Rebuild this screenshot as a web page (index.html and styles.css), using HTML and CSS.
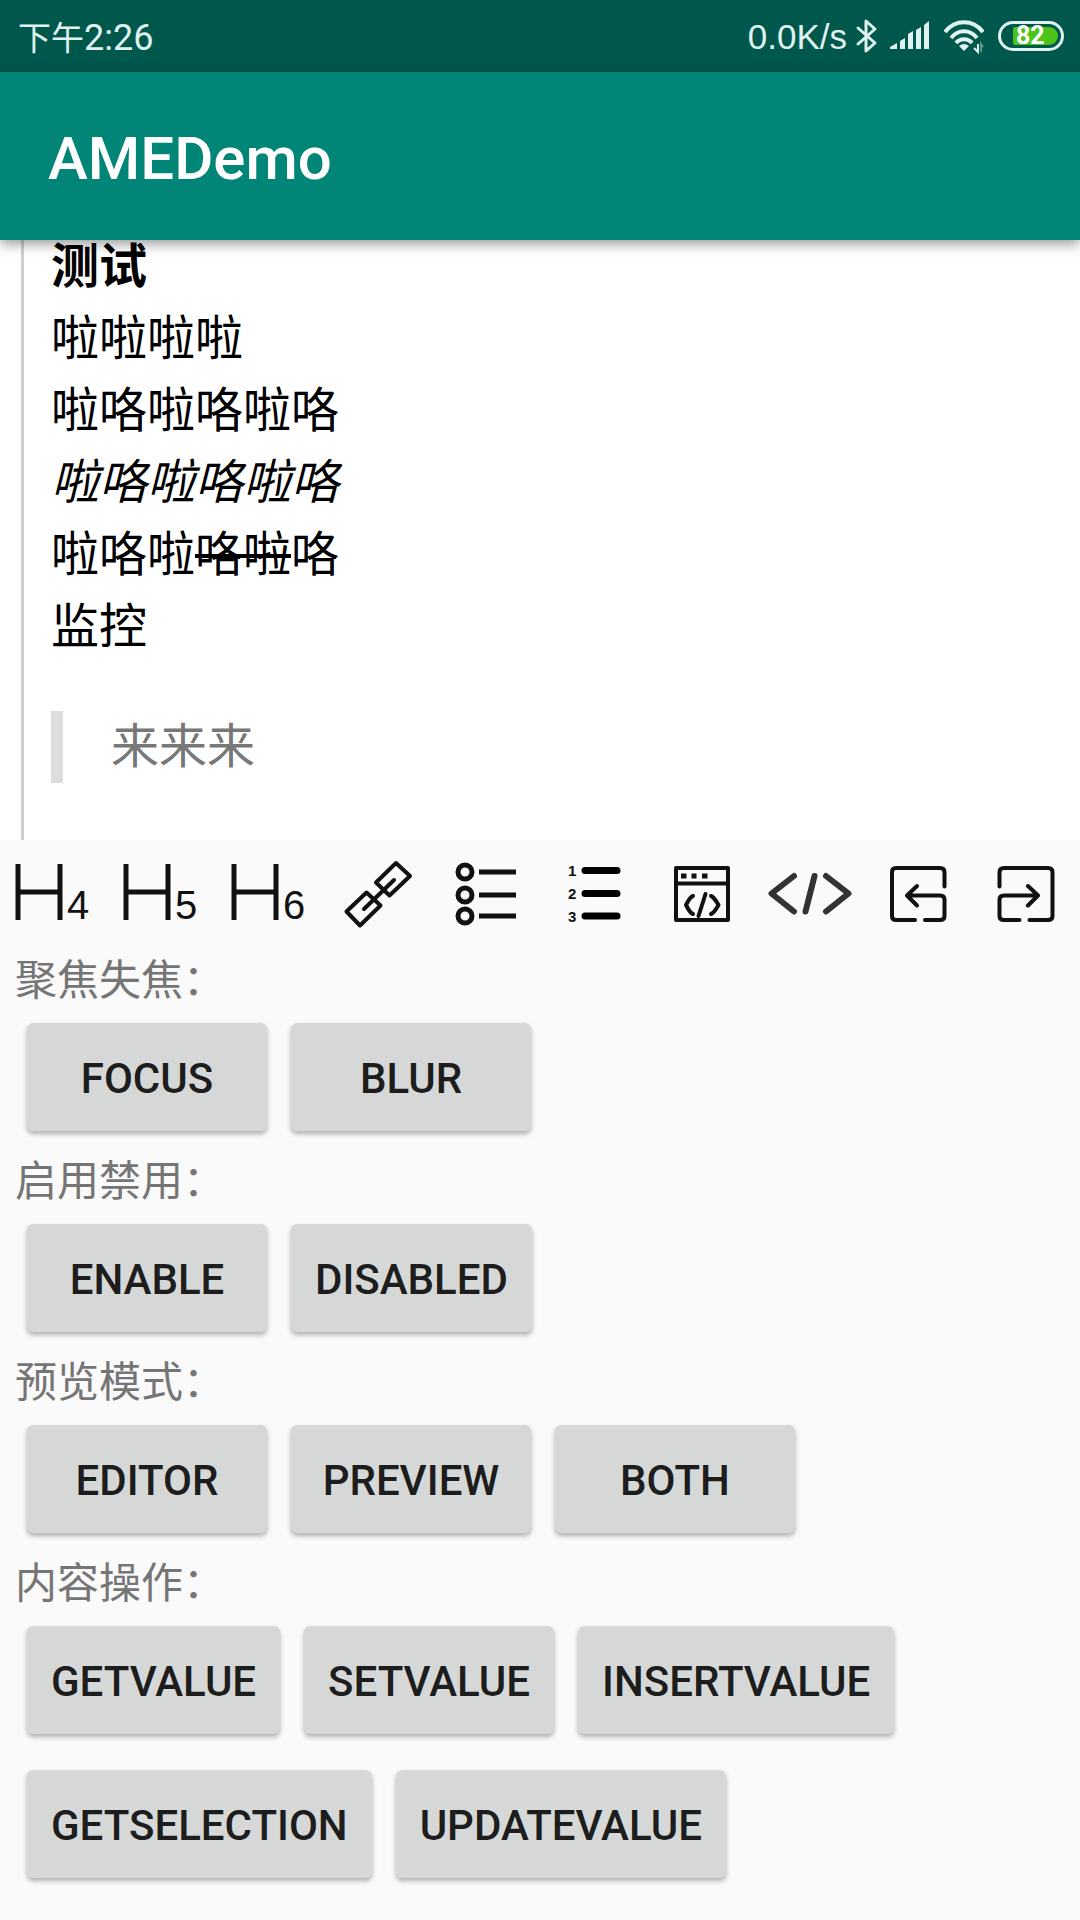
FILE: index.html
```html
<!DOCTYPE html>
<html lang="zh-CN">
<head>
<meta charset="utf-8">
<meta name="viewport" content="width=device-width, initial-scale=1">
<title>AMEDemo</title>
<link rel="stylesheet" href="styles.css">
</head>
<body class="screen">
  <div class="status-bar">
    <div class="clock"><span class="clock-period">下午</span>2:26</div>
    <div class="status-icons">
      <span class="net-speed">0.0K/s</span>
      <svg class="status-svg" width="24" height="36" viewBox="0 0 24 36" fill="none" stroke="#e0f2f0" stroke-width="3" stroke-linejoin="round" stroke-linecap="round"><path d="M3 10 20 25 11 33V3L20 11 3 26"/></svg>
      <svg class="status-svg signal" width="40" height="36" viewBox="0 0 40 36" fill="#e0f2f0"><path d="M0 31V29L7 25V31ZM10 31V23L15 20V31ZM18 31V16L23 13V31ZM26 31V12L31 9V31ZM34 31V7L39 3V31Z"/></svg>
      <svg class="status-svg wifi" width="40" height="36" viewBox="0 0 40 36" fill="none" stroke="#e0f2f0" stroke-width="4"><path d="M1 14C11 1 29 1 39 14M7 20C14 11 26 11 33 20M12 25C16 20 24 20 28 25"/><path d="M15 28Q20 24 25 28L20 33Z" fill="#e0f2f0" stroke="none"/><path d="M34 26V34L30 30" stroke-width="2"/><path d="M37 34V26L39 29" stroke="#5e9990" stroke-width="2"/></svg>
      <div class="battery"><span class="battery-level">82</span></div>
    </div>
  </div>

  <header class="app-bar"><h1 class="app-title">AMEDemo</h1></header>

  <main class="editor">
    <article class="document">
      <p class="paragraph"><strong>测试</strong><br>啦啦啦啦<br>啦咯啦咯啦咯<br><em>啦咯啦咯啦咯</em><br>啦咯啦<del>咯啦</del>咯<br>监控</p>
      <blockquote class="quote">来来来</blockquote>
    </article>
  </main>

  <nav class="toolbar" aria-label="Format">
    <button class="tool" type="button" aria-label="Heading 4"><svg viewBox="0 0 108 108"><path class="heavy" d="M18 24V80M60 24V80M18 52H60"/><text class="heading-level" x="67" y="79">4</text></svg></button>
    <button class="tool" type="button" aria-label="Heading 5"><svg viewBox="0 0 108 108"><path class="heavy" d="M18 24V80M60 24V80M18 52H60"/><text class="heading-level" x="67" y="79">5</text></svg></button>
    <button class="tool" type="button" aria-label="Heading 6"><svg viewBox="0 0 108 108"><path class="heavy" d="M18 24V80M60 24V80M18 52H60"/><text class="heading-level" x="67" y="79">6</text></svg></button>
    <button class="tool" type="button" aria-label="Link"><svg viewBox="0 0 108 108"><path d="M72 23 86 36 65.500 55.500 52 42.500ZM42.500 52.500 56.500 65.500 36 85.500 22.500 71.500ZM70 40 40 69"/></svg></button>
    <button class="tool" type="button" aria-label="Bulleted list"><svg viewBox="0 0 108 108"><g class="heavy"><circle cx="33" cy="32" r="7"/><circle cx="33" cy="55" r="7"/><circle cx="33" cy="76" r="7"/><path d="M47 32H84M47 55H84M47 76H84"/></g></svg></button>
    <button class="tool" type="button" aria-label="Numbered list"><svg viewBox="0 0 108 108"><path class="bars" d="M45 30.500H77M45 53.500H77M45 76H77"/><g class="list-digit"><text x="28" y="36">1</text><text x="28" y="59">2</text><text x="28" y="82">3</text></g></svg></button>
    <button class="tool" type="button" aria-label="Code block"><svg viewBox="0 0 108 108"><path d="M28 28H80V80H28ZM28 43.500H80"/><path class="dots" d="M33 36H38.500M43.500 36H48.500M54 36H59.500"/><path d="M45 56Q42 57 38 65 42 73 45 74M57.500 54 50.500 76M63 56Q66 57 70.500 65 66 73 63 74"/></svg></button>
    <button class="tool" type="button" aria-label="Inline code"><svg viewBox="0 0 108 108"><path class="inline-code" d="M38 36 15.500 53.500 38 71.500M58.500 36 49.500 71.500M70 36 92.500 53.500 70 71.500"/></svg></button>
    <button class="tool" type="button" aria-label="Undo"><svg viewBox="0 0 108 108"><path d="M51 80H32Q28 80 28 76V32Q28 28 32 28H76Q80.500 28 80.500 32V46.500M43 55.500H76Q80.500 55.500 80.500 59.500V76Q80.500 80 76 80H61M53 46 43 55.500 53 65.500"/></svg></button>
    <button class="tool" type="button" aria-label="Redo"><svg viewBox="0 0 108 108"><path d="M57.500 80H76Q80.500 80 80.500 76V32Q80.500 28 76 28H32Q27.500 28 27.500 32V46.500M66 55.500H32Q27.500 55.500 27.500 59.500V76Q27.500 80 32 80H47.500M56 46 66 55.500 56 65.500"/></svg></button>
  </nav>

  <section class="controls">
    <h2 class="label">聚焦失焦：</h2>
    <div class="button-row">
      <button class="btn" type="button">FOCUS</button>
      <button class="btn" type="button">BLUR</button>
    </div>
    <h2 class="label">启用禁用：</h2>
    <div class="button-row">
      <button class="btn" type="button">ENABLE</button>
      <button class="btn" type="button">DISABLED</button>
    </div>
    <h2 class="label">预览模式：</h2>
    <div class="button-row">
      <button class="btn" type="button">EDITOR</button>
      <button class="btn" type="button">PREVIEW</button>
      <button class="btn" type="button">BOTH</button>
    </div>
    <h2 class="label">内容操作：</h2>
    <div class="button-row">
      <button class="btn" type="button">GETVALUE</button>
      <button class="btn" type="button">SETVALUE</button>
      <button class="btn" type="button">INSERTVALUE</button>
    </div>
    <div class="button-row">
      <button class="btn" type="button">GETSELECTION</button>
      <button class="btn" type="button">UPDATEVALUE</button>
    </div>
  </section>
</body>
</html>
```
FILE: styles.css
```css
* {
  box-sizing: border-box;
}

.screen {
  display: flex;
  flex-direction: column;
  height: 100vh;
  margin: 0;
  background: #fafafa;
  font-family: Roboto, "Noto Sans CJK SC", sans-serif;
}

/* System status bar */
.status-bar {
  display: flex;
  flex: none;
  align-items: center;
  justify-content: space-between;
  height: 72px;
  padding: 0 16px 0 18px;
  background: #00574b;
  color: #e0f2f0;
  font-size: 36px;
}

.clock {
  line-height: 72px;
  padding-top: 4px;
}

.clock-period {
  font-size: 33px;
}

.status-icons {
  display: flex;
  align-items: center;
}

.net-speed {
  margin-right: 8px;
  padding-top: 2px;
  font-family: "Liberation Sans", sans-serif;
  font-size: 35px;
}

.signal {
  margin-left: 11px;
}

.wifi {
  margin: 0 14px;
}

.battery {
  display: flex;
  width: 66px;
  height: 30px;
  padding: 3px;
  border: 3px solid #e0f2f0;
  border-radius: 15px;
}

.battery-level {
  flex: 1;
  margin-left: 9px;
  border-radius: 2px 9px 9px 2px;
  background: #4cc417;
  color: #fff;
  font-size: 25px;
  font-weight: 700;
  line-height: 18px;
  text-indent: 3px;
}

/* App bar */
.app-bar {
  z-index: 1;
  display: flex;
  flex: none;
  align-items: center;
  height: 168px;
  padding: 4px 48px 0;
  background: #008577;
  box-shadow: 0 4px 12px rgba(0, 0, 0, 0.4);
}

.app-title {
  margin: 0;
  color: #fff;
  font-size: 60px;
  font-weight: 500;
}

/* Preview pane, scrolled to its end */
.editor {
  display: flex;
  flex: 1 1 0;
  flex-direction: column;
  justify-content: flex-end;
  min-height: 0;
  overflow: hidden;
  background: #fff;
}

.document {
  flex: none;
  margin-left: 21px;
  padding: 0 27px 57px;
  border-left: 3px solid #d0d0d0;
  color: #000;
  font-family: Roboto, "Noto Sans CJK SC", sans-serif;
  font-size: 48px;
  font-weight: 400;
  line-height: 72px;
}

.paragraph {
  margin: 0 0 48px;
}

.document strong {
  font-weight: 700;
}

.document del {
  text-decoration-thickness: 4px;
}

.quote {
  margin: 0;
  padding-left: 48px;
  border-left: 12px solid #ddd;
  color: #777;
}

/* Formatting toolbar */
.toolbar {
  display: grid;
  flex: none;
  grid-template-columns: repeat(10, 1fr);
  height: 108px;
}

.tool {
  display: flex;
  align-items: center;
  justify-content: center;
  padding: 0;
  border: 0;
  background: none;
}

.tool svg {
  width: 108px;
  height: 108px;
  fill: none;
  stroke: #111;
  stroke-width: 4;
  stroke-linecap: round;
  stroke-linejoin: round;
}

.tool .heavy {
  stroke-width: 5;
  stroke-linecap: butt;
}

.tool .bars {
  stroke: #000;
  stroke-width: 7;
}

.tool .dots {
  stroke-linecap: butt;
  stroke-width: 5;
}

.tool .inline-code {
  stroke: #333;
  stroke-width: 6;
}

.tool text {
  fill: #111;
  stroke: none;
  font-family: "Liberation Sans", sans-serif;
}

.heading-level {
  font-size: 40px;
}

.list-digit {
  font-size: 15px;
  font-weight: 700;
}

/* Control groups */
.controls {
  flex: none;
  padding-bottom: 24px;
}

.label {
  margin: 0;
  padding-left: 15px;
  color: #757575;
  font-family: "Noto Sans CJK SC", sans-serif;
  font-size: 42px;
  font-weight: 400;
  line-height: 57px;
}

.button-row {
  display: flex;
  gap: 24px;
  padding: 18px 27px;
}

.btn {
  min-width: 240px;
  height: 108px;
  padding: 3px 24px 0;
  border: 0;
  border-radius: 6px;
  background: #d6d8d7;
  box-shadow: 0 3px 5px rgba(0, 0, 0, 0.3);
  color: #1c1d1c;
  font-family: Roboto, sans-serif;
  font-size: 42px;
  font-weight: 500;
}
```
